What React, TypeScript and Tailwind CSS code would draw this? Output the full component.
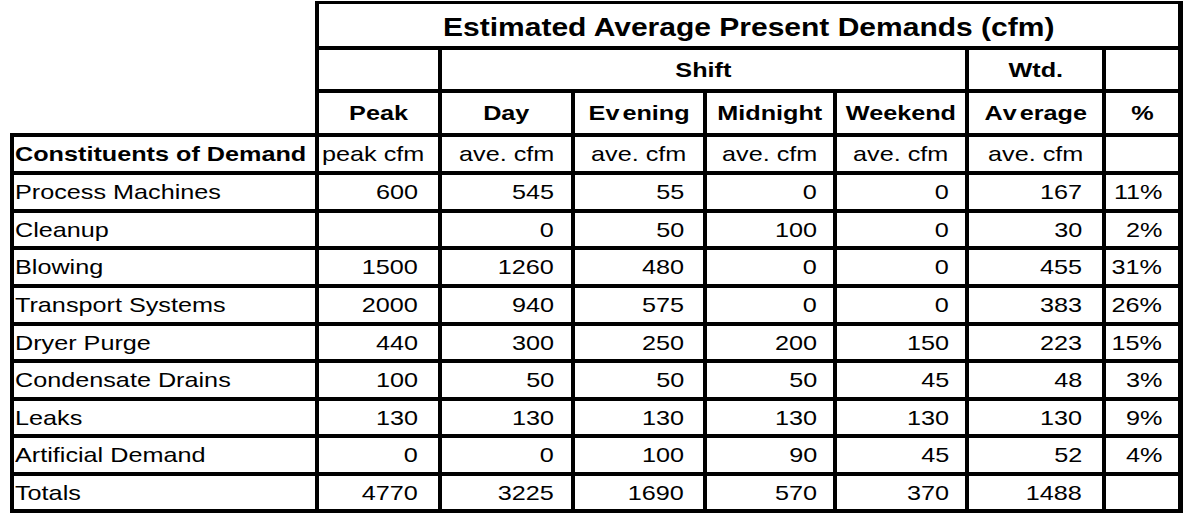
import React from "react";

type Align = "left" | "center" | "right";

const rows = [
  ["Process Machines", "600", "545", "55", "0", "0", "167", "11%"],
  ["Cleanup", "", "0", "50", "100", "0", "30", "2%"],
  ["Blowing", "1500", "1260", "480", "0", "0", "455", "31%"],
  ["Transport Systems", "2000", "940", "575", "0", "0", "383", "26%"],
  ["Dryer Purge", "440", "300", "250", "200", "150", "223", "15%"],
  ["Condensate Drains", "100", "50", "50", "50", "45", "48", "3%"],
  ["Leaks", "130", "130", "130", "130", "130", "130", "9%"],
  ["Artificial Demand", "0", "0", "100", "90", "45", "52", "4%"],
  ["Totals", "4770", "3225", "1690", "570", "370", "1488", ""],
];

// right padding of the number columns (peak .. %)
const padRight = [
  "pr-[20px]",
  "pr-[17px]",
  "pr-[19px]",
  "pr-[16px]",
  "pr-[16px]",
  "pr-[20px]",
  "pr-[16px]",
];

const origin: Record<Align, string> = {
  left: "origin-left",
  center: "origin-center",
  right: "origin-right",
};

const justify: Record<Align, string> = {
  left: "justify-start",
  center: "justify-center",
  right: "justify-end",
};

// the sheet is rendered a little wide, so stretch the glyphs
function Txt({ children, align }: { children: React.ReactNode; align: Align }) {
  return (
    <span className={`inline-block whitespace-nowrap scale-x-[1.2] ${origin[align]}`}>
      {children}
    </span>
  );
}

function Cell({
  children,
  align = "center",
  className = "",
}: {
  children?: React.ReactNode;
  align?: Align;
  className?: string;
}) {
  return (
    <div className={`bg-white flex items-center ${justify[align]} ${className}`}>
      {children !== undefined && children !== "" && <Txt align={align}>{children}</Txt>}
    </div>
  );
}

export default function App() {
  return (
    <div className="min-h-screen bg-white text-black font-['Liberation_Sans',Arial,sans-serif]">
      <div className="ml-[10px] mt-[1px] w-fit grid grid-cols-[301px_119px_129px_128px_126px_128px_133px_72px] grid-rows-[42px_39px_40px_34px_34px_33px_34px_34px_33px_34px_33px_34px_33px] gap-[4px] bg-black pt-[3px] pl-[4px] pr-[5px] pb-[4px]">
        {/* blank corner, no borders */}
        <div className="row-span-3 bg-white -mt-[3px] -ml-[4px]" />

        {/* Title */}
        <Cell className="col-span-7 pt-[5px] text-[25px] font-bold">
          Estimated Average Present Demands (cfm)
        </Cell>

        {/* Shift row */}
        <Cell />
        <Cell className="col-span-4 text-[21px] font-bold">Shift</Cell>
        <Cell className="text-[21px] font-bold">Wtd.</Cell>
        <Cell />

        {/* Column headings */}
        <Cell className="text-[21px] font-bold">Peak</Cell>
        <Cell className="text-[21px] font-bold">Day</Cell>
        <Cell className="text-[21px] font-bold">
          E<span className="tracking-[2.5px]">v</span>ening
        </Cell>
        <Cell className="text-[21px] font-bold">Midnight</Cell>
        <Cell className="text-[21px] font-bold">Weekend</Cell>
        <Cell className="text-[21px] font-bold">
          A<span className="tracking-[2.5px]">v</span>erage
        </Cell>
        <Cell className="text-[21px] font-bold">%</Cell>

        {/* Units row */}
        <Cell align="left" className="pl-[1px] text-[21px] font-bold">
          Constituents of Demand
        </Cell>
        <Cell align="left" className="pl-[3px] text-[21px]">
          peak cfm
        </Cell>
        {[0, 1, 2, 3, 4].map((i) => (
          <Cell key={i} className="text-[21px]">
            ave. cfm
          </Cell>
        ))}
        <Cell />

        {/* Data */}
        {rows.map((row) => (
          <React.Fragment key={row[0]}>
            <Cell align="left" className="pl-[1px] text-[21px]">
              {row[0]}
            </Cell>
            {row.slice(1).map((v, i) => (
              <Cell key={i} align="right" className={`${padRight[i]} text-[21px]`}>
                {v}
              </Cell>
            ))}
          </React.Fragment>
        ))}
      </div>
    </div>
  );
}
